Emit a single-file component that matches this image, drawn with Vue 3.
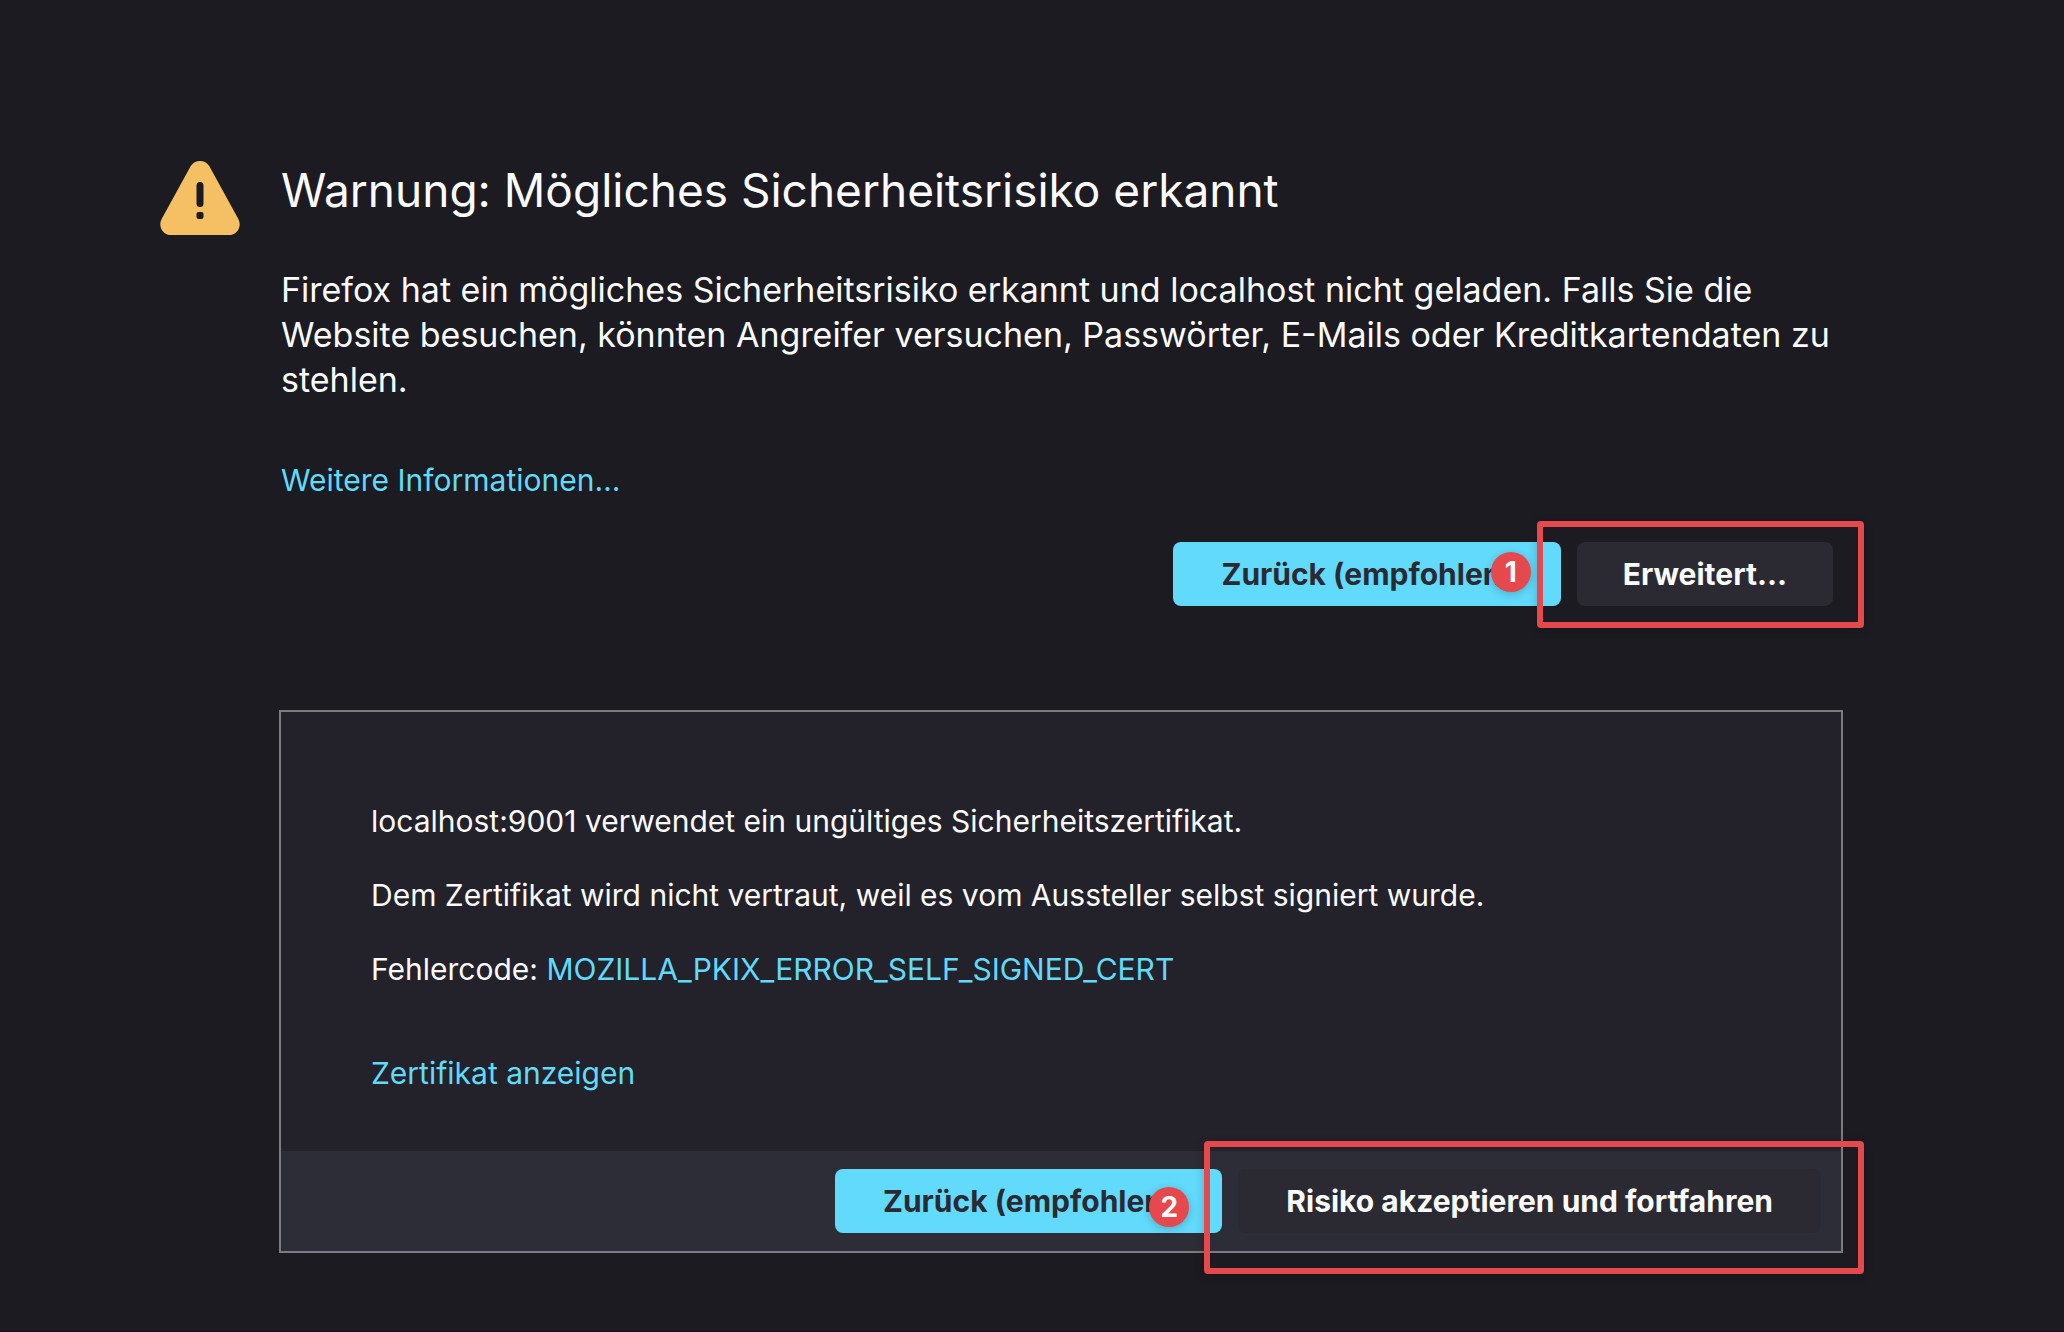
<script setup>
const errorCode = 'MOZILLA_PKIX_ERROR_SELF_SIGNED_CERT'
</script>

<template>
  <main class="page">
    <svg class="warning-icon" viewBox="0 0 80 76" aria-hidden="true">
      <path
        d="M30.6 6.2C34.6-.8 45.4-.8 49.4 6.2L78.2 58.8C82.4 66.4 77.2 75 68.9 75H11.1C2.8 75-2.4 66.4 1.8 58.8Z"
        fill="#f5c064"
      />
      <rect x="36.5" y="22" width="7" height="25" rx="3.5" fill="#1c1b22" />
      <rect x="36.5" y="52" width="7" height="7" rx="2" fill="#1c1b22" />
    </svg>

    <div class="content">
      <h1>Warnung: Mögliches Sicherheitsrisiko erkannt</h1>
      <p class="intro">
        Firefox hat ein mögliches Sicherheitsrisiko erkannt und localhost nicht geladen. Falls Sie die
        Website besuchen, könnten Angreifer versuchen, Passwörter, E-Mails oder Kreditkartendaten zu
        stehlen.
      </p>
      <p class="more"><a href="#">Weitere Informationen…</a></p>

      <div class="actions">
        <button type="button" class="primary">Zurück (empfohlen)</button>
        <div class="marked">
          <button type="button" class="secondary">Erweitert…</button>
          <div class="marker marker-first"><span class="badge">1</span></div>
        </div>
      </div>

      <section class="panel">
        <div class="details">
          <p>localhost:9001 verwendet ein ungültiges Sicherheitszertifikat.</p>
          <p>Dem Zertifikat wird nicht vertraut, weil es vom Aussteller selbst signiert wurde.</p>
          <p>Fehlercode: <a href="#">{{ errorCode }}</a></p>
          <p class="certificate"><a href="#">Zertifikat anzeigen</a></p>
        </div>
        <div class="panel-actions">
          <button type="button" class="primary">Zurück (empfohlen)</button>
          <div class="marked">
            <button type="button" class="secondary">Risiko akzeptieren und fortfahren</button>
            <div class="marker marker-second"><span class="badge">2</span></div>
          </div>
        </div>
      </section>
    </div>
  </main>
</template>

<style>
body {
  background: #1c1b22;
}
</style>

<style scoped>
.page {
  box-sizing: border-box;
  min-height: 100vh;
  display: grid;
  grid-template-columns: 80px minmax(0, 1fr);
  column-gap: 39px;
  align-items: start;
  padding: 160px 221px 76px 160px;
  border-bottom: 1px solid #1c0e1c;
  background: #1c1b22;
  color: #fbfbfe;
  font-family: Inter, "Liberation Sans", sans-serif;
  font-size: 30px;
  line-height: 44px;
}

.warning-icon {
  width: 80px;
  height: 76px;
}

h1 {
  margin: 0 2px 47px;
  font-size: 46px;
  font-weight: 400;
  line-height: 60px;
}

p {
  margin: 0;
}

a {
  color: #61dafb;
  text-decoration: none;
}

.intro {
  margin: 0 0 56px 2px;
  font-size: 34px;
  line-height: 45px;
}

.more {
  margin: 0 0 40px 2px;
}

.actions,
.panel-actions {
  display: flex;
  justify-content: flex-end;
  gap: 16px;
}

.actions {
  margin: 0 10px 104px 0;
}

button {
  height: 64px;
  padding: 0 48px;
  border: 0;
  border-radius: 8px;
  font: inherit;
  font-weight: 700;
  white-space: nowrap;
}

.actions .secondary {
  padding: 0 46px;
}

.primary {
  background: #61dafb;
  color: #2b2a33;
}

.secondary {
  background: #2b2a33;
  color: #fbfbfe;
}

.panel {
  border: 2px solid #7b7b80;
  background: #23222b;
}

.details {
  display: flex;
  flex-direction: column;
  gap: 30px;
  padding: 87px 90px 56px;
}

.certificate {
  margin-top: 30px;
}

.panel-actions {
  padding: 18px 20px;
  background: #2c2d36;
}

.marked {
  position: relative;
}

.marker {
  position: absolute;
  border: 6px solid #e5484d;
  border-radius: 4px;
  box-shadow: 0 2px 10px rgba(0, 0, 0, 0.2);
  pointer-events: none;
}

.marker-first {
  inset: -21px -31px -22px -40px;
}

.marker-second {
  inset: -28px -43px -41px -34px;
}

.badge {
  position: absolute;
  left: -52px;
  top: 25px;
  width: 40px;
  height: 40px;
  border-radius: 50%;
  background: #e5484d;
  box-shadow: 0 2px 8px rgba(0, 0, 0, 0.2);
  color: #fff;
  font-size: 28px;
  font-weight: 700;
  line-height: 40px;
  text-align: center;
}

.marker-second .badge {
  left: -61px;
  top: 40px;
}
</style>
